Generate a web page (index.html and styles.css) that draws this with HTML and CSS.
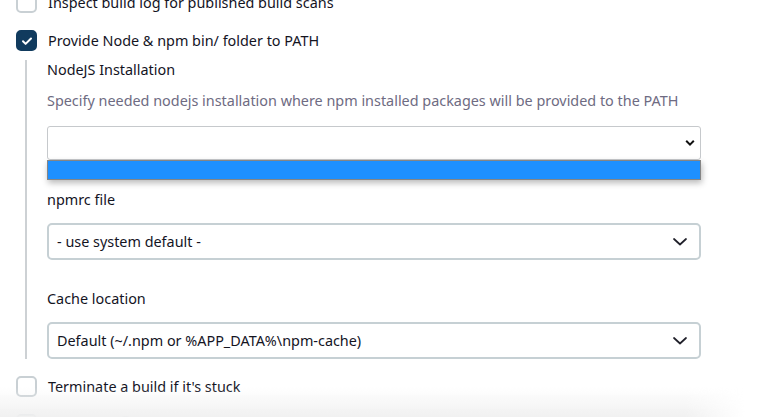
FILE: index.html
```html
<!DOCTYPE html>
<html lang="en">
<head>
<meta charset="utf-8">
<title>Build Environment</title>
<link rel="stylesheet" href="styles.css">
</head>
<body>
<div class="page">
  <div class="check-row first">
    <span class="box"></span>
    <span class="check-label">Inspect build log for published build scans</span>
  </div>
  <div class="check-row">
    <span class="box checked">
      <svg viewBox="0 0 20 20" width="20" height="20"><path d="M6 10.3l2.6 2.6L14 7.5" fill="none" stroke="#fff" stroke-width="2" stroke-linecap="round" stroke-linejoin="round"/></svg>
    </span>
    <span class="check-label">Provide Node &amp; npm bin/ folder to PATH</span>
  </div>
  <div class="nested">
    <div class="field-label">NodeJS Installation</div>
    <div class="field-desc">Specify needed nodejs installation where npm installed packages will be provided to the PATH</div>
    <div class="native-select">
      <svg class="native-chev" viewBox="0 0 10 8" width="10" height="8"><path d="M1.2 1.8L5 5.6l3.8-3.8" fill="none" stroke="#111" stroke-width="2"/></svg>
      <div class="dropdown-list"><div class="option-active"></div></div>
    </div>
    <div class="field-label gap-a">npmrc file</div>
    <div class="select gap-b">
      <span>- use system default -</span>
      <svg viewBox="0 0 14 8" width="14" height="8"><path d="M1 1l6 5.5L13 1" fill="none" stroke="#20202a" stroke-width="1.7" stroke-linecap="round" stroke-linejoin="round"/></svg>
    </div>
    <div class="field-label gap-a">Cache location</div>
    <div class="select gap-b">
      <span>Default (~/.npm or %APP_DATA%\npm-cache)</span>
      <svg viewBox="0 0 14 8" width="14" height="8"><path d="M1 1l6 5.5L13 1" fill="none" stroke="#20202a" stroke-width="1.7" stroke-linecap="round" stroke-linejoin="round"/></svg>
    </div>
  </div>
  <div class="check-row after-nested">
    <span class="box"></span>
    <span class="check-label">Terminate a build if it's stuck</span>
  </div>
  <div class="check-row">
    <span class="box"></span>
    <span class="check-label">With Ant</span>
    <span class="help">?</span>
  </div>
</div>
<div class="bottom-fade"></div>
</body>
</html>
```

FILE: styles.css
```css
html, body {
  margin: 0;
  padding: 0;
  background: #fff;
  overflow: hidden;
}
body {
  font-family: "Noto Sans", "Open Sans", sans-serif;
  font-size: 14.4px;
  color: #14141f;
  height: 417px;
}
.page {
  margin-top: -8px;
  padding: 0 71px 0 16px;
}
.check-row {
  display: flex;
  align-items: center;
  gap: 11px;
  height: 21px;
}
.check-row + .check-row {
  margin-top: 17px;
}
.box {
  width: 17px;
  height: 17px;
  border: 2px solid #c9d0d4;
  border-radius: 5px;
  flex: none;
  display: flex;
  align-items: center;
  justify-content: center;
}
.box.checked {
  background: #113b5e;
  border-color: #113b5e;
}
.box.checked svg {
  flex: none;
}
.check-label {
  font-size: 14.4px;
  line-height: 20px;
  white-space: nowrap;
}
.nested {
  margin: 9px 0 0 9px;
  border-left: 2px solid #cdd1d4;
  padding-left: 20px;
}
.field-label {
  font-size: 14.4px;
  line-height: 20px;
}
.field-desc {
  margin-top: 11px;
  font-size: 14.4px;
  line-height: 20px;
  color: #6e6b82;
  white-space: nowrap;
}
.native-select {
  position: relative;
  margin-top: 15px;
  height: 32px;
  border: 1px solid #c6c9cc;
  border-radius: 3px;
  display: flex;
  align-items: center;
  justify-content: flex-end;
  padding-right: 5px;
}
.dropdown-list {
  position: absolute;
  left: -1px;
  right: -1px;
  top: 33px;
  height: 18px;
  border: 1px solid #858585;
  background: #fff;
  box-shadow: 1px 3px 6px rgba(0, 0, 0, 0.28);
}
.option-active {
  height: 100%;
  background: #1e90ff;
}
.gap-a {
  margin-top: 30px;
}
.select {
  height: 33px;
  border: 2px solid #c6d0d4;
  border-radius: 5px;
  display: flex;
  align-items: center;
  justify-content: space-between;
  padding: 0 12px 0 8px;
  font-size: 14.4px;
}
.gap-b {
  margin-top: 13px;
}
.gap-b + .gap-a {
  margin-top: 29px;
}
.after-nested {
  margin-top: 17px;
}
.help {
  width: 15px;
  height: 15px;
  border: 1.5px solid #c9d0d4;
  border-radius: 50%;
  font-size: 11px;
  line-height: 15px;
  text-align: center;
  color: #6e6b82;
}
.bottom-fade {
  position: fixed;
  left: 0;
  bottom: 0;
  width: 745px;
  height: 30px;
  background: linear-gradient(to bottom, rgba(240, 240, 240, 0), rgba(240, 240, 240, 0.95));
  -webkit-mask-image: linear-gradient(to right, #000 92%, transparent 100%);
  mask-image: linear-gradient(to right, #000 92%, transparent 100%);
}
```
